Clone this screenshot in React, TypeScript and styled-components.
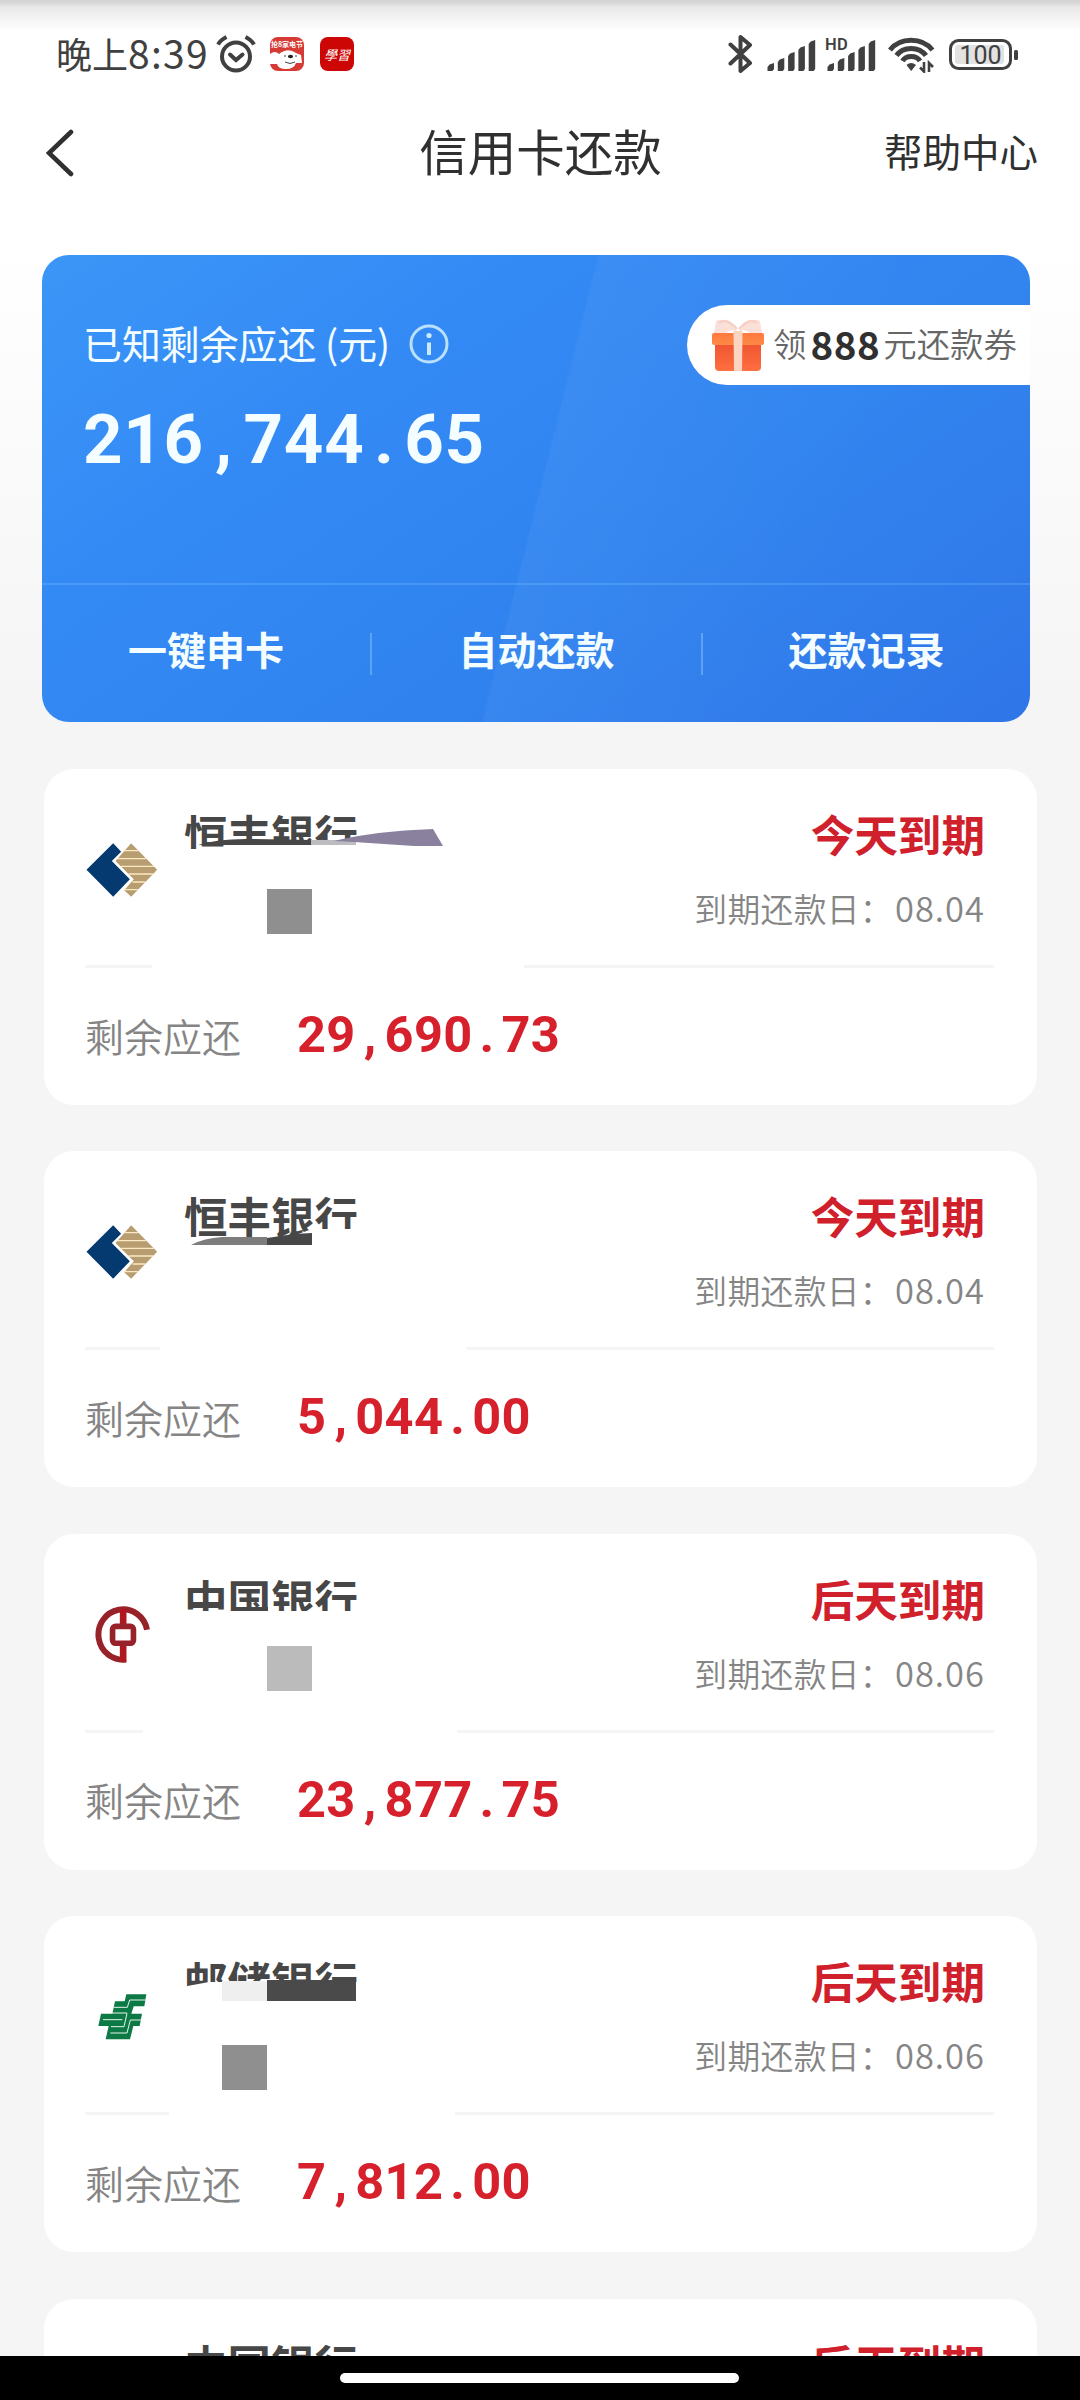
import React from "react";
import styled, { createGlobalStyle } from "styled-components";

const CJK = `"Noto Sans CJK SC", "Noto Sans", sans-serif`;

const Global = createGlobalStyle`
  * { box-sizing: border-box; }
  body { margin: 0; background: #f5f5f5; font-family: ${CJK}; color: #333; }
`;

const Screen = styled.div`
  width: 1080px;
  height: 2400px;
  overflow: hidden;
  display: flex;
  flex-direction: column;
  background:
    linear-gradient(180deg, #d3d3d3 0, #d8d8d8 3px, #e8e8e8 7px, #f3f3f3 18px, rgba(255, 255, 255, 0) 32px),
    linear-gradient(180deg, #fff 0, #fff 240px, #f5f5f5 700px);
`;

const Scroll = styled.main`
  flex: 1;
  min-height: 0;
  overflow: hidden;
`;

const StatusBar = styled.header`
  height: 108px;
  padding: 0 61px 0 56px;
  display: flex;
  justify-content: space-between;
  align-items: center;
  color: #404040;
`;

const StatusGroup = styled.div`
  display: flex;
  align-items: center;
`;

const Clock = styled.span`
  font-size: 36px;
  line-height: 50px;
  margin-top: -4px;
  white-space: nowrap;
`;

const ClockDigits = styled.span`
  font-size: 39px;
  letter-spacing: 1.3px;
`;

const StatusIcon = styled.svg<{ $ml?: number }>`
  display: block;
  flex: none;
  margin-left: ${(p) => p.$ml ?? 0}px;
`;

const TitleBar = styled.nav`
  height: 90px;
  padding: 0 42px 0 46px;
  display: grid;
  grid-template-columns: 1fr auto 1fr;
  align-items: center;
  color: #303030;
`;

const Title = styled.h1`
  margin: -6px 3px 0 0;
  font-size: 48.5px;
  font-weight: 400;
  line-height: 64px;
`;

const HelpLink = styled.a`
  justify-self: end;
  margin-top: -7px;
  font-size: 38.5px;
  line-height: 54px;
`;

const Hero = styled.section`
  margin: 57px 50px 0 42px;
  height: 467px;
  border-radius: 27px;
  overflow: hidden;
  color: #f4fdff;
  background:
    linear-gradient(104deg, rgba(255, 255, 255, 0) 50.3%, rgba(255, 255, 255, 0.04) 50.5%, rgba(255, 255, 255, 0.01) 78%),
    linear-gradient(145deg, #3b96f7 0%, #348af5 30%, #3083ef 62%, #2d74e8 100%);
`;

const HeroTop = styled.div`
  height: 328px;
  display: flex;
  justify-content: space-between;
  align-items: flex-start;
`;

const HeroTotals = styled.div`
  padding: 65px 0 0 41px;
`;

const HeroLabel = styled.div`
  display: flex;
  align-items: center;
  height: 48px;
  font-size: 38.9px;
  line-height: 48px;
  white-space: pre;
`;

const HeroLabelText = styled.span`
  margin-top: -4px;
`;

const HeroAmount = styled.div`
  margin-top: 37px;
  font: 700 69px/70px Roboto, "Noto Sans", sans-serif;
  letter-spacing: 0.7px;
`;

const Mark = styled.span`
  display: inline-block;
  width: 0.575em;
  text-align: center;
`;

const Coupon = styled.div`
  width: 343px;
  height: 80px;
  margin-top: 50px;
  padding-left: 25px;
  display: flex;
  align-items: center;
  border-radius: 40px 0 0 40px;
  background: #fff;
  color: #666;
  font-size: 33.4px;
  font-weight: 350;
  line-height: 44px;
  white-space: nowrap;
`;

const CouponText = styled.span`
  margin: -4px 0 0 9px;
  display: flex;
  align-items: center;
`;

const CouponValue = styled.b`
  margin: 0 3px 0 4px;
  font: 700 38.5px/44px ${CJK};
  letter-spacing: 0.6px;
  color: #303030;
`;

const HeroTabs = styled.div`
  height: 139px;
  border-top: 2px solid rgba(120, 190, 255, 0.3);
  display: grid;
  grid-template-columns: 330px 331px 1fr;
  align-items: center;
`;

const HeroTab = styled.div<{ $divided?: boolean }>`
  height: 42px;
  display: flex;
  align-items: center;
  justify-content: center;
  border-right: ${(p) => (p.$divided ? "2px solid rgba(160, 210, 255, 0.4)" : "0")};
  font-size: 39px;
  font-weight: 600;
  line-height: 38px;
  padding-bottom: 11px;
`;

const CardList = styled.div`
  padding: 47px 43px 0 44px;
  display: flex;
  flex-direction: column;
  gap: 46.4px;
`;

const Card = styled.article`
  position: relative;
  height: 336px;
  flex: none;
  border-radius: 30px;
  background: #fff;
`;

const CardTop = styled.div`
  height: 196px;
  padding: 0 52px 0 37px;
  display: flex;
`;

const LogoBox = styled.div`
  width: 82px;
  height: 202px;
  display: flex;
  align-items: center;
  justify-content: center;
`;

const BankName = styled.h2`
  margin: 35px 0 0 21px;
  font-size: 43.5px;
  font-weight: 600;
  line-height: 60px;
  color: #474747;
  white-space: nowrap;
`;

const Due = styled.div`
  margin-left: auto;
  padding-top: 34px;
  text-align: right;
  white-space: nowrap;
`;

const DueStatus = styled.div`
  font-size: 43.6px;
  font-weight: 700;
  line-height: 60px;
  color: #cf202c;
`;

const DueDate = styled.div`
  margin-top: 21px;
  font-size: 32.8px;
  font-weight: 350;
  line-height: 46px;
  letter-spacing: 0.3px;
  color: #858585;
`;

const DueDay = styled.span`
  margin-left: 2px;
  font-size: 34.5px;
  letter-spacing: 1px;
`;

const Rule = styled.div`
  height: 3px;
  padding: 0 43px 0 41px;
  display: flex;
  justify-content: space-between;
`;

const RulePart = styled.span<{ $w: number }>`
  width: ${(p) => p.$w}px;
  background: #f5f5f5;
`;

const CardBottom = styled.div`
  height: 136px;
  padding: 0 0 2px 41px;
  display: flex;
  align-items: center;
`;

const RemainLabel = styled.span`
  width: 212px;
  font-size: 39px;
  font-weight: 350;
  line-height: 56px;
  margin-top: -1px;
  color: #858585;
`;

const Remain = styled.span`
  font: 700 50.5px/60px Roboto, "Noto Sans", sans-serif;
  letter-spacing: 0.3px;
  color: #d6202b;
`;

const Mosaic = styled.svg`
  position: absolute;
  left: 0;
  top: 0;
`;

const GestureBar = styled.footer`
  height: 44px;
  flex: none;
  display: flex;
  justify-content: center;
  align-items: center;
  padding-right: 2px;
  background: #000;
`;

const Handle = styled.span`
  width: 399px;
  height: 10px;
  border-radius: 5px;
  background: #fff;
`;

function Money({ value }: { value: string }) {
  return (
    <>
      {value.split("").map((c, i) => (/\d/.test(c) ? c : <Mark key={i}>{c}</Mark>))}
    </>
  );
}

function HengFengLogo() {
  return (
    <svg width="72" height="54" viewBox="171 248 215 162">
      <path d="M172 328 252 249 276 274 248 302 302 357 252 409Z" fill="#043a70" />
      <path d="M306 249 384 328 306 409 285 390 314 357 259 302Z" fill="#b79d70" />
      <path d="M284 271h44M262 295h88M276 318h98M298 341h74M310 365h38M284 388h42" stroke="#fbe9c4" strokeWidth="4" />
    </svg>
  );
}

function BankOfChinaLogo() {
  return (
    <svg width="55" height="58" viewBox="196 257 166 174" fill="none">
      <path d="M353 328A74 76 0 1 0 290 418" stroke="#98222a" strokeWidth="18" />
      <path d="M281 265V312M281 376V424" stroke="#b01820" strokeWidth="20" />
      <rect x="249" y="318" width="63" height="51" rx="9" stroke="#98222a" strokeWidth="17" />
    </svg>
  );
}

function PostalLogo() {
  return (
    <svg width="49" height="46" viewBox="25 28 147 138">
      <path
        d="M110 29H170L164 65H132L125 87H157L150 124H131L121 164H48L57 124H26L34 87H68L76 50H105Z"
        fill="#0d7a45"
      />
      <g fill="none" stroke="#e4f5ea" strokeWidth="3">
        <path d="M168 46H120L113 68H72" />
        <path d="M66 85H112" />
        <path d="M40 105H98" />
        <path d="M154 106H122L112 145H62" />
        <path d="M112 86 103 126H64" />
      </g>
    </svg>
  );
}

function BluetoothIcon() {
  return (
    <StatusIcon width="26" height="40" viewBox="0 0 26 40">
      <path d="M2.5 10.5 22 29 12.5 37V3L22 11 2.5 29.5" fill="none" stroke="#404040" strokeWidth="4" strokeLinejoin="round" strokeLinecap="round" />
    </StatusIcon>
  );
}

const BARS = [8, 13, 19, 25, 31];

function SignalIcon({ hd }: { hd?: boolean }) {
  return (
    <StatusIcon $ml={hd ? 9 : 13} width={hd ? 51 : 49} height="40" viewBox={hd ? "-2 0 51 40" : "0 0 49 40"}>
      {BARS.map((h, i) => (
        <path key={h} d={`M${i * 10.3 + 0.5} 37v${-(h - 4)}l2-2.5 4.500-1.500V35l-1.500 2Z`} fill="#404040" />
      ))}
      {hd && (
        <text x="-2" y="16" fontFamily="Roboto" fontWeight="600" fontSize="16.5" fill="#404040" letterSpacing="0.3">
          HD
        </text>
      )}
    </StatusIcon>
  );
}

function WifiIcon() {
  return (
    <StatusIcon $ml={12} width="47" height="38" viewBox="0 0 47 38">
      <g fill="none" stroke="#404040" strokeWidth="5">
        <path d="M2 15C12 2 34 2 44.500 15" />
        <path d="M8.500 20.500C15 11 31 11 38 20.500" />
        <path d="M14.500 26C18 20 28.500 20 32 26" />
      </g>
      <path d="M18.500 30Q23 26 28 30L23.200 36Z" fill="#404040" />
      <path d="M36 27v9.500l-4-4M41 37v-9l4 4" fill="none" stroke="#404040" strokeWidth="2.600" />
    </StatusIcon>
  );
}

function BatteryIcon() {
  return (
    <StatusIcon $ml={14} width="70" height="34" viewBox="0 0 70 34">
      <rect x="1.500" y="3.500" width="60" height="28" rx="8" fill="#fff" stroke="#404040" strokeWidth="3" />
      <rect x="6" y="8" width="49" height="19" rx="3" fill="#e2e2e2" />
      <rect x="65" y="13" width="4" height="10" rx="1.500" fill="#404040" />
      <text x="31.500" y="26.500" textAnchor="middle" fontFamily="Roboto" fontSize="25" fill="#404040">
        100
      </text>
    </StatusIcon>
  );
}

function AlarmIcon() {
  return (
    <StatusIcon $ml={7} width="40" height="38" viewBox="0 0 40 38">
      <g fill="none" stroke="#404040" strokeWidth="4">
        <circle cx="20" cy="21.500" r="14" />
        <path d="M14 19.500l6 5.500 6.500-5.500" strokeLinecap="round" />
        <path d="M2 9.500Q4.500 5 10.500 2M38 9.500Q35.500 5 29.500 2" />
      </g>
    </StatusIcon>
  );
}

function DogAppIcon() {
  return (
    <StatusIcon $ml={14} width="34" height="34" viewBox="0 0 34 34">
      <rect width="34" height="34" rx="8" fill="#d63a34" />
      <path d="M0 17Q5 13 9 17Q18 10 26 16L31 18 32 26 26 26Q24 32 16 32Q8 32 7 27L0 27Z" fill="#fff" />
      <ellipse cx="20.500" cy="19.500" rx="2.600" ry="1.800" fill="#222" />
      <path d="M15 18v2M26 18v2M15 25q5 3 10 0" stroke="#444" strokeWidth="1" fill="none" />
      <text x="17" y="10" textAnchor="middle" fontFamily="Noto Sans CJK SC" fontWeight="700" fontSize="7" fill="#fff">
        抢8家电节
      </text>
    </StatusIcon>
  );
}

function StudyAppIcon() {
  return (
    <StatusIcon $ml={16} width="34" height="34" viewBox="0 0 34 34">
      <rect width="34" height="34" rx="8" fill="#cc0505" />
      <text x="17" y="23" textAnchor="middle" fontFamily="Noto Sans CJK SC" fontStyle="italic" fontSize="13" fill="#fff">
        學習
      </text>
    </StatusIcon>
  );
}

function InfoIcon() {
  return (
    <StatusIcon $ml={19} width="40" height="40" viewBox="0 0 40 40">
      <circle cx="20" cy="20" r="18" fill="none" stroke="#b9e1ff" strokeWidth="3" />
      <circle cx="20" cy="11.500" r="2.600" fill="#c9eaff" />
      <path d="M20 18.500V31" stroke="#c9eaff" strokeWidth="4" />
    </StatusIcon>
  );
}

function GiftIcon() {
  return (
    <svg width="52" height="54" viewBox="0 0 52 54">
      <defs>
        <linearGradient id="lid" x1="0" y1="0" x2="0" y2="1">
          <stop offset="0" stopColor="#ff7840" />
          <stop offset="1" stopColor="#fd8a45" />
        </linearGradient>
        <linearGradient id="box" x1="0" y1="0" x2="0" y2="1">
          <stop offset="0" stopColor="#ee5230" />
          <stop offset="1" stopColor="#ff7040" />
        </linearGradient>
      </defs>
      <path d="M26 14Q14-2 4 3L2 15H14Q20 10 26 14Q32 10 38 15H50L48 3Q38-2 26 14Z" fill="#fbe0d9" />
      <g fill="none" stroke="#f6cfc6" strokeWidth="2.500">
        <path d="M25 11Q14-1 7 5" />
        <path d="M27 11Q38-1 45 5" />
      </g>
      <rect x="3" y="24" width="46" height="29" rx="4" fill="url(#box)" />
      <rect x="0" y="15" width="52" height="12" rx="2" fill="url(#lid)" />
      <path d="M21.500 13h9l-.5 40h-8Z" fill="#fbd5c2" />
    </svg>
  );
}

type CardData = {
  bank: string;
  logo: React.ReactNode;
  status: string;
  date: string;
  amount: string;
  rule: [number, number];
  mosaic?: React.ReactNode;
};

const CARDS: CardData[] = [
  {
    bank: "恒丰银行",
    logo: <HengFengLogo />,
    status: "今天到期",
    date: "08.04",
    amount: "29,690.73",
    rule: [67, 470],
    mosaic: (
      <>
        <path d="M138 80H182V76L200 71H330V104H138Z" fill="#fff" />
        <path d="M154 76Q175 69 210 70L267 71V76Z" fill="#474747" />
        <path d="M267 71H312V76H267Z" fill="#bdbcc0" />
        <path d="M290 72Q330 62 389 60L399 77H370Q340 75 310 73Z" fill="#8a819e" />
        <rect x="223" y="120" width="45" height="45" fill="#8f8f8f" />
      </>
    ),
  },
  {
    bank: "恒丰银行",
    logo: <HengFengLogo />,
    status: "今天到期",
    date: "08.04",
    amount: "5,044.00",
    rule: [75, 528],
    mosaic: (
      <>
        <path d="M138 86H246L268 78H330V104H138Z" fill="#fff" />
        <path d="M147 94Q160 87 178 86H223V94Z" fill="#7d7d7d" />
        <path d="M223 87L250 83 268 82V94H223Z" fill="#474747" />
      </>
    ),
  },
  {
    bank: "中国银行",
    logo: <BankOfChinaLogo />,
    status: "后天到期",
    date: "08.06",
    amount: "23,877.75",
    rule: [58, 537],
    mosaic: (
      <>
        <path d="M138 77H330V104H138Z" fill="#fff" />
        <path d="M145 70H178V74H145ZM190 73H224V77H190Z" fill="#474747" />
        <rect x="223" y="112" width="45" height="45" fill="#bbb" />
      </>
    ),
  },
  {
    bank: "邮储银行",
    logo: <PostalLogo />,
    status: "后天到期",
    date: "08.06",
    amount: "7,812.00",
    rule: [84, 539],
    mosaic: (
      <>
        <path d="M138 71L165 66H330V104H138Z" fill="#fff" />
        <rect x="178" y="65" width="45" height="20" fill="#efefef" />
        <rect x="223" y="64" width="89" height="21" fill="#4a4a4a" />
        <rect x="178" y="129" width="45" height="45" fill="#8f8f8f" />
      </>
    ),
  },
  {
    bank: "中国银行",
    logo: <BankOfChinaLogo />,
    status: "后天到期",
    date: "",
    amount: "",
    rule: [84, 539],
  },
];

function BankCard({ card }: { card: CardData }) {
  return (
    <Card>
      <CardTop>
        <LogoBox>{card.logo}</LogoBox>
        <BankName>{card.bank}</BankName>
        <Due>
          <DueStatus>{card.status}</DueStatus>
          {card.date && (
            <DueDate>
              到期还款日：<DueDay>{card.date}</DueDay>
            </DueDate>
          )}
        </Due>
      </CardTop>
      <Rule>
        <RulePart $w={card.rule[0]} />
        <RulePart $w={card.rule[1]} />
      </Rule>
      {card.amount && (
        <CardBottom>
          <RemainLabel>剩余应还</RemainLabel>
          <Remain>
            <Money value={card.amount} />
          </Remain>
        </CardBottom>
      )}
      {card.mosaic && (
        <Mosaic width="420" height="190" viewBox="0 0 420 190">
          {card.mosaic}
        </Mosaic>
      )}
    </Card>
  );
}

export default function App() {
  return (
    <Screen>
      <Global />
      <Scroll>
        <StatusBar>
          <StatusGroup>
            <Clock>
              晚上<ClockDigits>8:39</ClockDigits>
            </Clock>
            <AlarmIcon />
            <DogAppIcon />
            <StudyAppIcon />
          </StatusGroup>
          <StatusGroup>
            <BluetoothIcon />
            <SignalIcon />
            <SignalIcon hd />
            <WifiIcon />
            <BatteryIcon />
          </StatusGroup>
        </StatusBar>
        <TitleBar>
          <svg width="28" height="48" viewBox="0 0 28 48">
            <path d="M25 3 3 24 25 45" fill="none" stroke="#303030" strokeWidth="4.600" strokeLinecap="round" />
          </svg>
          <Title>信用卡还款</Title>
          <HelpLink>帮助中心</HelpLink>
        </TitleBar>
        <Hero>
          <HeroTop>
            <HeroTotals>
              <HeroLabel>
                <HeroLabelText>已知剩余应还 (元)</HeroLabelText>
                <InfoIcon />
              </HeroLabel>
              <HeroAmount>
                <Money value="216,744.65" />
              </HeroAmount>
            </HeroTotals>
            <Coupon>
              <GiftIcon />
              <CouponText>
                领<CouponValue>888</CouponValue>元还款券
              </CouponText>
            </Coupon>
          </HeroTop>
          <HeroTabs>
            <HeroTab $divided>一键申卡</HeroTab>
            <HeroTab $divided>自动还款</HeroTab>
            <HeroTab>还款记录</HeroTab>
          </HeroTabs>
        </Hero>
        <CardList>
          {CARDS.map((card, i) => (
            <BankCard key={i} card={card} />
          ))}
        </CardList>
      </Scroll>
      <GestureBar>
        <Handle />
      </GestureBar>
    </Screen>
  );
}
